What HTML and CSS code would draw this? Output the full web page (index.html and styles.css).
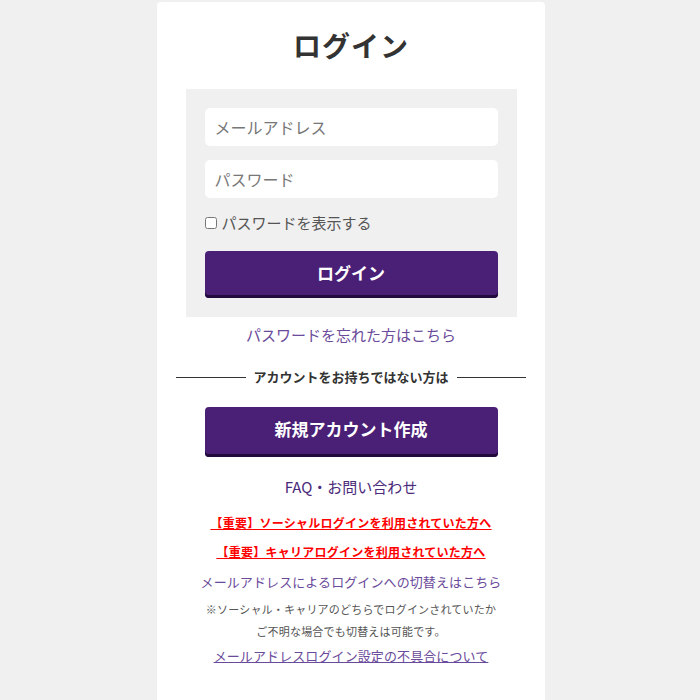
FILE: index.html
```html
<!DOCTYPE html>
<html lang="ja">
<head>
  <meta charset="UTF-8">
  <meta name="viewport" content="width=device-width, initial-scale=1.0">
  <title>ログイン</title>
  <link rel="stylesheet" href="styles.css">
</head>
<body>
  <div class="card">
    <h1 class="title">ログイン</h1>
    <form class="login-box">
      <input class="field" type="text" placeholder="メールアドレス">
      <input class="field" type="password" placeholder="パスワード">
      <label class="show-pass"><input type="checkbox"> パスワードを表示する</label>
      <button class="btn" type="button">ログイン</button>
    </form>
    <a class="link forgot" href="#">パスワードを忘れた方はこちら</a>
    <div class="divider"><span>アカウントをお持ちではない方は</span></div>
    <button class="btn btn-new" type="button">新規アカウント作成</button>
    <a class="link faq" href="#">FAQ・お問い合わせ</a>
    <a class="important" href="#">【重要】ソーシャルログインを利用されていた方へ</a>
    <a class="important" href="#">【重要】キャリアログインを利用されていた方へ</a>
    <a class="link switch" href="#">メールアドレスによるログインへの切替えはこちら</a>
    <p class="note">※ソーシャル・キャリアのどちらでログインされていたか<br>ご不明な場合でも切替えは可能です。</p>
    <a class="link trouble" href="#">メールアドレスログイン設定の不具合について</a>
  </div>
</body>
</html>
```

FILE: styles.css
```css
* {
  margin: 0;
  padding: 0;
  box-sizing: border-box;
}
body {
  background-color: #f0f0f0;
  font-family: "Noto Sans CJK JP", "Noto Sans", sans-serif;
  color: #333;
}
.card {
  width: 388px;
  min-height: 698px;
  margin: 2px 0 0 calc(50% - 193px);
  padding: 24px 0 0;
  background-color: #fff;
  border-radius: 4px 4px 0 0;
  display: flex;
  flex-direction: column;
  align-items: center;
}
.title {
  font-size: 28px;
  font-weight: bold;
  line-height: 38px;
  letter-spacing: 1px;
  color: #333;
}
/* 灰色のフォーム枠 */
.login-box {
  width: 331px;
  margin-top: 25px;
  padding: 19px 19px 19px;
  background-color: #f0f0f0;
  display: flex;
  flex-direction: column;
}
.field {
  height: 38px;
  padding: 0 10px;
  border: none;
  border-radius: 5px;
  background: #fff;
  font-family: inherit;
  font-size: 16px;
  color: #333;
}
.field + .field {
  margin-top: 14px;
}
.field::placeholder {
  color: #777;
}
.show-pass {
  display: flex;
  align-items: center;
  gap: 5px;
  margin-top: 13px;
  font-size: 15px;
  line-height: 24px;
  color: #555;
}
.show-pass input {
  width: 12px;
  height: 12px;
  margin: 0;
}
.btn {
  width: 293px;
  height: 47px;
  border: none;
  border-radius: 4px;
  background-color: #4a2076;
  box-shadow: inset 0 -3px #230a3d;
  color: #fff;
  font-family: inherit;
  font-size: 17px;
  font-weight: bold;
  padding-bottom: 4px;
}
.login-box .btn {
  margin-top: 16px;
}
.link {
  color: #6a4a9a;
  text-decoration: none;
  font-size: 15px;
}
.forgot {
  margin-top: 6px;
  line-height: 24px;
}
/* 区切り線 */
.divider {
  width: 350px;
  margin-top: 20px;
  display: flex;
  align-items: center;
  gap: 8px;
  font-size: 13px;
  font-weight: bold;
  color: #333;
  line-height: 20px;
}
.divider::before,
.divider::after {
  content: '';
  flex: 1;
  height: 1px;
  background-color: #333;
}
.btn-new {
  margin-top: 20px;
  height: 50px;
  padding-bottom: 7px;
}
.faq {
  margin-top: 19px;
  line-height: 22px;
  color: #4a2a7a;
}
.important {
  color: #f00;
  font-size: 12px;
  font-weight: bold;
  text-decoration: underline;
  line-height: 18px;
  letter-spacing: 0.25px;
}
.faq + .important {
  margin-top: 16px;
}
.important + .important {
  margin-top: 11px;
}
.switch {
  margin-top: 10px;
  line-height: 22px;
  font-size: 13px;
  letter-spacing: 0.1px;
}
.note {
  margin-top: 5px;
  font-size: 11px;
  line-height: 22px;
  color: #555;
  text-align: center;
  letter-spacing: 0.2px;
}
.trouble {
  margin-top: 3px;
  text-decoration: underline;
  line-height: 22px;
  font-size: 13px;
  letter-spacing: 0.1px;
}
```
